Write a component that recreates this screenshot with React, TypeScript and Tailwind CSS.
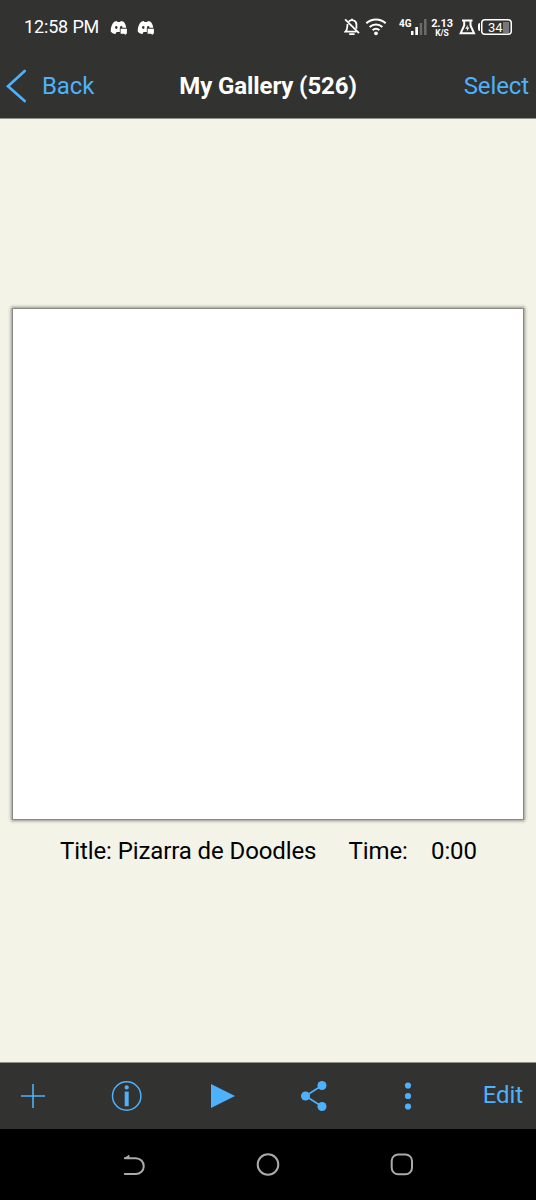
import type { ReactNode } from "react";

const blue = "#4db1fb";

function DiscordIcon() {
  return (
    <svg width="18" height="16" viewBox="0 0 18 16" fill="#fff">
      <path d="M4.2 1.8 6.8 1l.8 1h2.500l.8-1 2.800.8c1.600 1.900 2.400 4 2.500 6H9.800v4.300H6.500l-1 1.800C3.300 13.700 2 13 .8 11.700c-.3-3.900.9-7.300 3.400-9.900Z" />
      <ellipse cx="6.300" cy="7.500" rx="1.200" ry="1.400" fill="#323230" />
      <ellipse cx="11.200" cy="7.200" rx="1.200" ry="1.300" fill="#323230" />
      <path d="M10.600 8.700h6.300v5h-1.200v1.200l-1.700-1.200h-3.400Z" />
    </svg>
  );
}

function BellOffIcon() {
  return (
    <svg width="16" height="18" viewBox="0 0 16 18" fill="none" stroke="#fff" strokeWidth="1.800">
      <path d="M4.600 3.800A4.400 4.400 0 0 1 12.400 7v3.800M3.500 6c-.3 4 .1 5.700-2 7.600h11" />
      <path d="M1.100 1.300 15 15.200" />
      <path d="M8 .8v1.700M5.200 16.200h5.400" />
    </svg>
  );
}

function WifiIcon() {
  return (
    <svg width="22" height="19" viewBox="0 0 22 19" fill="none" stroke="#fff" strokeWidth="2">
      <path d="M1.300 6.200a14.300 14.300 0 0 1 19.400 0M4.600 9.900a9.700 9.700 0 0 1 12.800 0M7.600 13.100a5.500 5.500 0 0 1 6.800 0" />
      <circle cx="11" cy="16.300" r="1.900" fill="#fff" stroke="none" />
    </svg>
  );
}

function FlaskIcon() {
  return (
    <svg width="17" height="16" viewBox="0 0 17 16" fill="none" stroke="#fff" strokeWidth="2">
      <path d="M3 1.500h10.500M5.200 1.500v5L1.700 14.200h13.300L11.500 6.500v-5" />
      <path d="m8.900 5.800-2.600 4h1.900l-.5 2.800 2.700-4H8.500Z" fill="#fff" stroke="none" />
    </svg>
  );
}

function StatusBar() {
  return (
    <div className="flex h-[54px] items-center text-white">
      <span className="ml-[24px] w-[86px] text-[18px] leading-none tracking-[-0.15px] whitespace-nowrap">12:58 PM</span>
      <div className="mt-[2px] flex gap-[9px]">
        <DiscordIcon />
        <DiscordIcon />
      </div>
      <div className="ml-auto flex h-[18px] items-start">
        <BellOffIcon />
        <div className="-mt-[1px] ml-[5px] w-[34px]">
          <WifiIcon />
        </div>
        <div className="flex h-[18px] w-[33px]">
          <span className="mt-[-1px] w-[12px] text-[10px] leading-[13px] font-bold">4G</span>
          <svg width="17" height="17" viewBox="0 0 17 17" fill="#fff">
            <path d="M0 13h2.500v4H0zM4.300 9h2.700v8H4.300z" />
            <path d="M8.700 5h2.500v12H8.700zM13 1h2.600v16H13z" fill="#6a6a68" />
          </svg>
        </div>
        <div className="flex w-[20px] flex-col items-center font-bold whitespace-nowrap">
          <span className="mt-[1px] text-[11px] leading-[9px]">2.13</span>
          <span className="mt-px text-[8.500px] leading-[8px]">K/S</span>
        </div>
        <div className="mt-[1px] ml-[7px]">
          <FlaskIcon />
        </div>
        <div className="mt-[5px] ml-[2px] h-[8px] w-[2px] rounded-l bg-white" />
        <div className="mt-[1px] mr-[24px] ml-px flex h-[16px] w-[31px] items-center rounded-[4px] px-[2px] shadow-[inset_0_0_0_1.5px_#fff]">
          <div className="flex h-[11px] w-full items-center bg-[linear-gradient(90deg,transparent_20px,#777775_20px,#777775_26px,transparent_26px)] pl-[5px] text-[13px] leading-none">
            34
          </div>
        </div>
      </div>
    </div>
  );
}

function ToolButton({ label, className, children }: { label: string; className: string; children: ReactNode }) {
  return (
    <button aria-label={label} className={`flex h-full shrink-0 items-center justify-center ${className}`}>
      {children}
    </button>
  );
}

export default function App() {
  return (
    <div className="flex h-[1200px] w-[536px] flex-col overflow-hidden bg-[#f3f3e7] font-[Roboto,sans-serif] text-[24px] tracking-[-0.1px]">
      <header className="h-[119px] shrink-0 border-b border-[#90908a] bg-[#323230]">
        <StatusBar />
        <nav className="grid h-[63px] grid-cols-[1fr_auto_1fr] items-center text-[#4db1fb]">
          <button className="flex items-center">
            <svg width="42" height="36" viewBox="0 0 42 36" fill="none" stroke={blue} strokeWidth="2.700" strokeLinecap="round">
              <path d="M24.700 3 8 18.300 24.700 33" />
            </svg>
            Back
          </button>
          <h1 className="font-bold text-white">My Gallery (526)</h1>
          <button className="pr-[7px] text-right">Select</button>
        </nav>
      </header>

      <main className="flex-1 px-[12px] pt-[189px]">
        <div className="h-[512px] border border-[#888882] bg-white shadow-[0_0_3px_1px_#92928a]" />
        <div className="mt-[17px] flex text-black leading-[28px] whitespace-nowrap">
          <span className="ml-[48px] w-[288.5px]">Title: Pizarra de Doodles</span>
          <span className="w-[82.5px]">Time:</span>
          <span>0:00</span>
        </div>
      </main>

      <footer className="shrink-0">
        <div className="flex h-[67px] items-center border-t border-[#90908a] bg-[#323230] text-[#4db1fb]">
          <ToolButton label="Add" className="w-[65px]">
            <svg width="26" height="26" viewBox="0 0 26 26" stroke={blue} strokeWidth="1.600">
              <path d="M13 1v24M1 13h24" />
            </svg>
          </ToolButton>
          <ToolButton label="Info" className="ml-[29px] w-[65px]">
            <svg width="32" height="32" viewBox="0 0 32 32" fill={blue}>
              <circle cx="15.700" cy="16" r="14.200" fill="none" stroke={blue} strokeWidth="1.500" />
              <circle cx="15.700" cy="7.400" r="2.100" />
              <path d="M13.700 11.600h4v14.600h-4z" />
            </svg>
          </ToolButton>
          <ToolButton label="Play" className="ml-[31px] w-[65px]">
            <svg width="24" height="24" viewBox="0 0 24 24" fill={blue}>
              <path d="M0 0v24l24-12z" />
            </svg>
          </ToolButton>
          <ToolButton label="Share" className="ml-[26px] w-[65px]">
            <svg width="26" height="30" viewBox="0 0 26 30" fill={blue}>
              <path d="M21 4.500 4.500 15 21 25.500" fill="none" stroke={blue} strokeWidth="1.700" />
              <circle cx="21" cy="4.500" r="4.500" />
              <circle cx="4.500" cy="15" r="4.500" />
              <circle cx="21" cy="25.500" r="4.500" />
            </svg>
          </ToolButton>
          <ToolButton label="More" className="ml-[29px] w-[65px]">
            <svg width="8" height="28" viewBox="0 0 8 28" fill={blue}>
              <circle cx="4" cy="3.500" r="3.100" />
              <circle cx="4" cy="14" r="3.100" />
              <circle cx="4" cy="24.500" r="3.100" />
            </svg>
          </ToolButton>
          <button className="mr-[13px] ml-auto pb-[3px]">Edit</button>
        </div>
        <div className="flex h-[71px] items-center bg-black">
          <svg className="ml-[122px]" width="24" height="24" viewBox="0 0 24 24" fill="none" stroke="#aaa" strokeWidth="2" strokeLinecap="round">
            <path d="M2.800 5.200h11a7.900 7.900 0 0 1 0 15.900h-11" />
            <path d="M2.800 5.200 7 2.300v2.900Z" fill="#aaa" strokeWidth="1" strokeLinejoin="round" />
          </svg>
          <svg className="ml-[110px]" width="24" height="24" viewBox="0 0 24 24" fill="none" stroke="#aaa" strokeWidth="2">
            <circle cx="12" cy="11.500" r="10.300" />
          </svg>
          <svg className="ml-[110px]" width="24" height="24" viewBox="0 0 24 24" fill="none" stroke="#aaa" strokeWidth="2">
            <rect x="1.700" y="1.500" width="20.300" height="19.800" rx="6.500" />
          </svg>
        </div>
      </footer>
    </div>
  );
}
